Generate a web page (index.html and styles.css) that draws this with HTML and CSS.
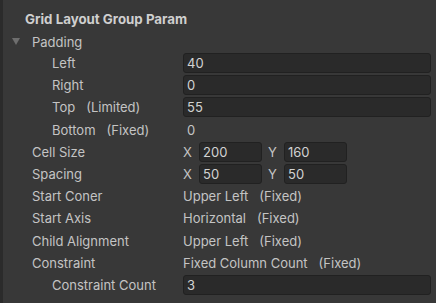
FILE: index.html
```
<!DOCTYPE html>
<html lang="en">
<head>
  <meta charset="UTF-8" />
  <title>Grid Layout Group Param</title>
  <link rel="stylesheet" href="styles.css">
</head>
<body>
  <div class="inspector">
    <div class="title">Grid Layout Group Param</div>

    <div class="row foldout">
      <span class="arrow"></span>
      <span class="label">Padding</span>
    </div>

    <div class="row indent2">
      <span class="label">Left</span>
      <div class="value"><div class="field">40</div></div>
    </div>
    <div class="row indent2">
      <span class="label">Right</span>
      <div class="value"><div class="field">0</div></div>
    </div>
    <div class="row indent2">
      <span class="label">Top<span class="note">(Limited)</span></span>
      <div class="value"><div class="field">55</div></div>
    </div>
    <div class="row indent2">
      <span class="label">Bottom<span class="note">(Fixed)</span></span>
      <div class="value"><span class="plain">0</span></div>
    </div>

    <div class="row indent1">
      <span class="label">Cell Size</span>
      <div class="value vec">
        <span class="axis">X</span><div class="field small">200</div>
        <span class="axis">Y</span><div class="field small">160</div>
      </div>
    </div>
    <div class="row indent1">
      <span class="label">Spacing</span>
      <div class="value vec">
        <span class="axis">X</span><div class="field small">50</div>
        <span class="axis">Y</span><div class="field small">50</div>
      </div>
    </div>
    <div class="row indent1">
      <span class="label">Start Coner</span>
      <div class="value">Upper Left<span class="note">(Fixed)</span></div>
    </div>
    <div class="row indent1">
      <span class="label">Start Axis</span>
      <div class="value">Horizontal<span class="note">(Fixed)</span></div>
    </div>
    <div class="row indent1">
      <span class="label">Child Alignment</span>
      <div class="value">Upper Left<span class="note">(Fixed)</span></div>
    </div>
    <div class="row indent1">
      <span class="label">Constraint</span>
      <div class="value">Fixed Column Count<span class="note">(Fixed)</span></div>
    </div>
    <div class="row indent2">
      <span class="label">Constraint Count</span>
      <div class="value"><div class="field">3</div></div>
    </div>
  </div>
</body>
</html>
```

FILE: styles.css
```
html, body {
  margin: 0;
  height: 100%;
  background-color: #383838;
}
body {
  font-family: Inter, 'Noto Sans', sans-serif;
  font-size: 13px;
  color: #c4c4c4;
}
.inspector {
  height: 100%;
  box-sizing: border-box;
  border-left: 3px solid #2b2b2b;
  padding: 9px 5px 0 0;
}
.title {
  font-weight: 700;
  font-size: 13.3px;
  color: #cfcfcf;
  padding-left: 22px;
  height: 22px;
  line-height: 20px;
}
.row {
  display: grid;
  grid-template-columns: 180px 1fr;
  align-items: center;
  height: 22.2px;
}
.foldout {
  display: flex;
  padding-left: 29px;
  position: relative;
  height: 21px;
}
.arrow {
  position: absolute;
  left: 9px;
  top: 7px;
  width: 0;
  height: 0;
  border-left: 4px solid transparent;
  border-right: 4px solid transparent;
  border-top: 7px solid #6e6e6e;
}
.indent1 .label {
  padding-left: 29px;
}
.indent2 .label {
  padding-left: 49px;
}
.note {
  margin-left: 11px;
}
.value {
  display: flex;
  align-items: center;
}
.value .note {
  margin-left: 11px;
}
.field {
  flex: 1;
  height: 20px;
  box-sizing: border-box;
  background-color: #2a2a2a;
  border: 1px solid #212121;
  border-radius: 3px;
  padding-left: 3px;
  line-height: 18px;
  color: #d2d2d2;
}
.field.small {
  flex: none;
  width: 63px;
}
.plain {
  padding-left: 4px;
}
.vec .axis {
  width: 16px;
}
.vec .axis + .field + .axis {
  margin-left: 6px;
}
```
